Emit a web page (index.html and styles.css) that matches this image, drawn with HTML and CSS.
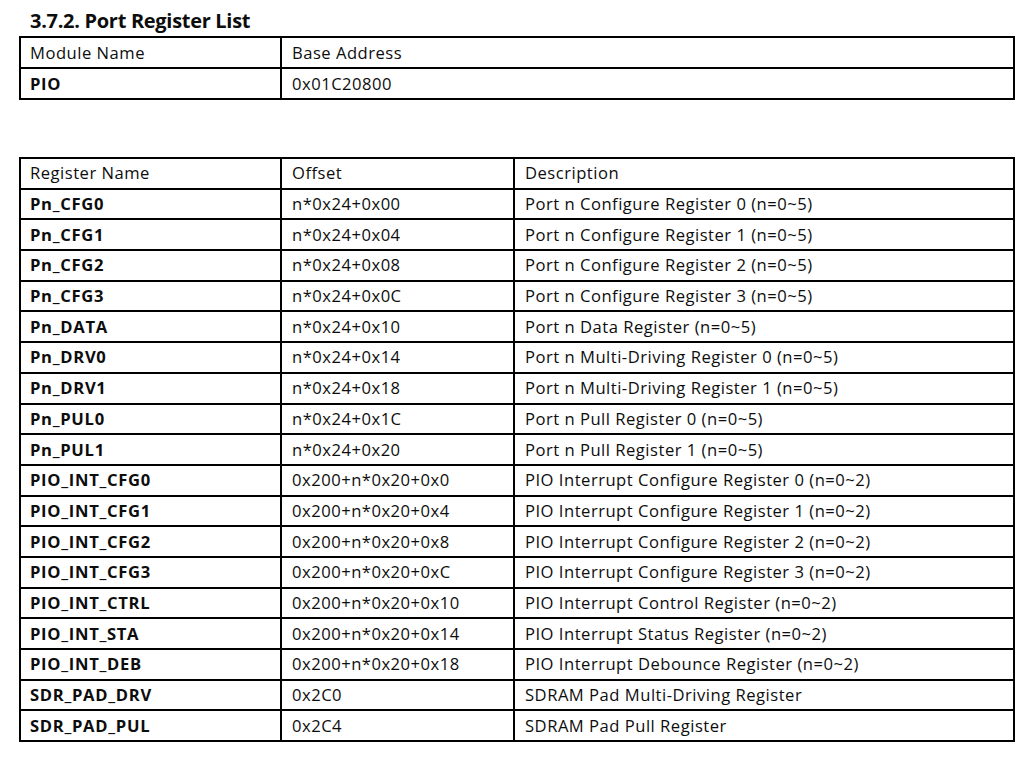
FILE: index.html
```html
<!DOCTYPE html>
<html>
<head>
<meta charset="utf-8">
<link rel="stylesheet" href="styles.css">
</head>
<body>
<div class="page">
  <h3 class="heading">3.7.2. Port Register List</h3>
  <table class="regtable module">
    <colgroup><col class="c1"><col></colgroup>
    <tr><td>Module Name</td><td>Base Address</td></tr>
    <tr><td class="b">PIO</td><td>0x01C20800</td></tr>
  </table>
  <table class="regtable list">
    <colgroup><col class="c1"><col class="c2"><col></colgroup>
    <tr><td>Register Name</td><td>Offset</td><td>Description</td></tr>
    <tr><td class="b">Pn_CFG0</td><td>n*0x24+0x00</td><td>Port n Configure Register 0 (n=0~5)</td></tr>
    <tr><td class="b">Pn_CFG1</td><td>n*0x24+0x04</td><td>Port n Configure Register 1 (n=0~5)</td></tr>
    <tr><td class="b">Pn_CFG2</td><td>n*0x24+0x08</td><td>Port n Configure Register 2 (n=0~5)</td></tr>
    <tr><td class="b">Pn_CFG3</td><td>n*0x24+0x0C</td><td>Port n Configure Register 3 (n=0~5)</td></tr>
    <tr><td class="b">Pn_DATA</td><td>n*0x24+0x10</td><td>Port n Data Register (n=0~5)</td></tr>
    <tr><td class="b">Pn_DRV0</td><td>n*0x24+0x14</td><td>Port n Multi-Driving Register 0 (n=0~5)</td></tr>
    <tr><td class="b">Pn_DRV1</td><td>n*0x24+0x18</td><td>Port n Multi-Driving Register 1 (n=0~5)</td></tr>
    <tr><td class="b">Pn_PUL0</td><td>n*0x24+0x1C</td><td>Port n Pull Register 0 (n=0~5)</td></tr>
    <tr><td class="b">Pn_PUL1</td><td>n*0x24+0x20</td><td>Port n Pull Register 1 (n=0~5)</td></tr>
    <tr><td class="b">PIO_INT_CFG0</td><td>0x200+n*0x20+0x0</td><td>PIO Interrupt Configure Register 0 (n=0~2)</td></tr>
    <tr><td class="b">PIO_INT_CFG1</td><td>0x200+n*0x20+0x4</td><td>PIO Interrupt Configure Register 1 (n=0~2)</td></tr>
    <tr><td class="b">PIO_INT_CFG2</td><td>0x200+n*0x20+0x8</td><td>PIO Interrupt Configure Register 2 (n=0~2)</td></tr>
    <tr><td class="b">PIO_INT_CFG3</td><td>0x200+n*0x20+0xC</td><td>PIO Interrupt Configure Register 3 (n=0~2)</td></tr>
    <tr><td class="b">PIO_INT_CTRL</td><td>0x200+n*0x20+0x10</td><td>PIO Interrupt Control Register (n=0~2)</td></tr>
    <tr><td class="b">PIO_INT_STA</td><td>0x200+n*0x20+0x14</td><td>PIO Interrupt Status Register (n=0~2)</td></tr>
    <tr><td class="b">PIO_INT_DEB</td><td>0x200+n*0x20+0x18</td><td>PIO Interrupt Debounce Register (n=0~2)</td></tr>
    <tr><td class="b">SDR_PAD_DRV</td><td>0x2C0</td><td>SDRAM Pad Multi-Driving Register</td></tr>
    <tr><td class="b">SDR_PAD_PUL</td><td>0x2C4</td><td>SDRAM Pad Pull Register</td></tr>
  </table>
</div>
</body>
</html>
```

FILE: styles.css
```css
html, body {
  margin: 0;
  padding: 0;
  background: #ffffff;
}
.page {
  padding: 0 20px 0 19px;
  font-family: "Open Sans", "Liberation Sans", sans-serif;
  color: #0d0d0d;
}
.heading {
  margin: 0;
  padding: 9px 0 0 11px;
  height: 28px;
  box-sizing: border-box;
  font-size: 20px;
  font-weight: 700;
  line-height: 24px;
  letter-spacing: -0.3px;
}
.regtable {
  border-collapse: collapse;
  width: 996px;
  table-layout: fixed;
  font-size: 16.6px;
  letter-spacing: 0.5px;
}
.regtable td {
  border: 2px solid #000;
  padding: 0 0 0 9px;
  height: 29px;
  line-height: 20px;
  white-space: nowrap;
  vertical-align: middle;
}
.regtable td + td {
  padding-left: 10px;
}
.module {
  margin-top: 8px;
}
.list {
  margin-top: 57px;
}
.list td {
  height: 28.7px;
}
.c1 { width: 261px; }
.c2 { width: 233px; }
.b { font-weight: 700; letter-spacing: 0.7px; }
```
